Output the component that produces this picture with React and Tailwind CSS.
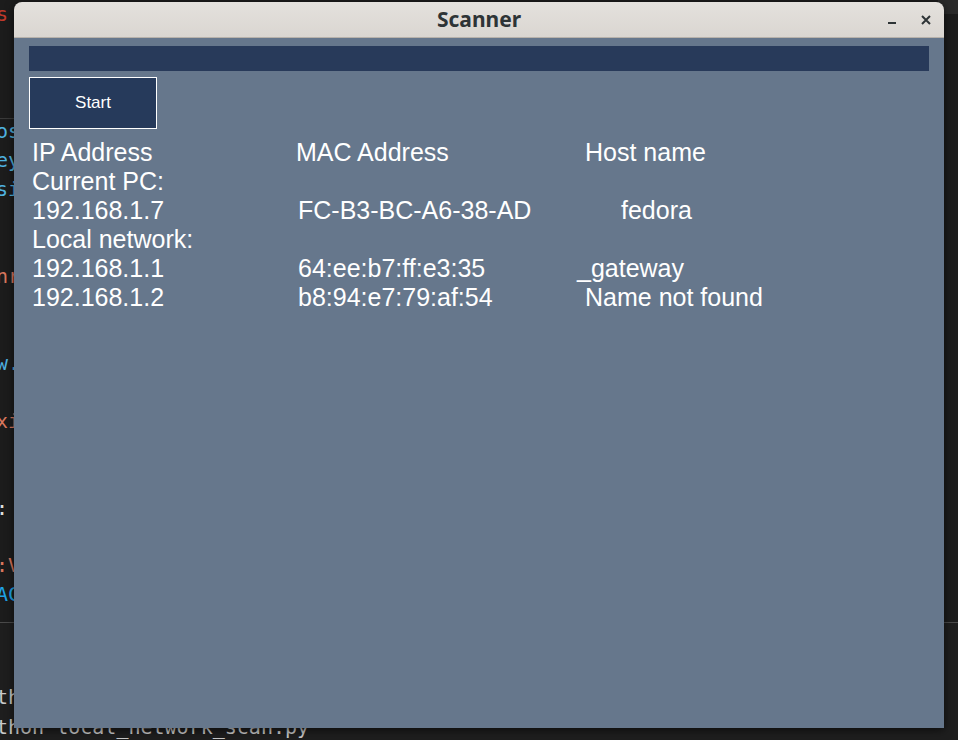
import React from "react";

const codeLines = [
  { top: 118, text: "os", color: "text-[#4fb3e0]" },
  { top: 147, text: "ey", color: "text-[#4fb3e0]" },
  { top: 176, text: "si", color: "text-[#4fb3e0]" },
  { top: 263, text: "nr", color: "text-[#d9775e]" },
  { top: 350, text: "w.", color: "text-[#4fb3e0]" },
  { top: 408, text: "xi", color: "text-[#d9775e]" },
  { top: 495, text: ":", color: "text-[#e0e0e0]" },
  { top: 552, text: ":V", color: "text-[#d9775e]" },
  { top: 581, text: "AC", color: "text-[#1fa3e6]" },
  { top: 684, text: "th", color: "text-[#c8c8c8]" },
  { top: 714, text: "thon local_network_scan.py", color: "text-[#c8c8c8]" },
];

const rows = [
  { ip: "IP Address", mac: "MAC Address", host: "Host name", macPad: "", hostPad: "" },
  { ip: "Current PC:" },
  { ip: "192.168.1.7", mac: "FC-B3-BC-A6-38-AD", host: "fedora", macPad: "pl-[2px]", hostPad: "pl-[36px]" },
  { ip: "Local network:" },
  { ip: "192.168.1.1", mac: "64:ee:b7:ff:e3:35", host: "_gateway", macPad: "pl-[2px]", hostPad: "-ml-[8px]" },
  { ip: "192.168.1.2", mac: "b8:94:e7:79:af:54", host: "Name not found", macPad: "pl-[2px]", hostPad: "" },
];

function Row({ ip, mac, host, macPad, hostPad }) {
  return (
    <div className="flex h-[29px] items-center whitespace-nowrap">
      <span className={mac ? "w-[264px] shrink-0" : ""}>{ip}</span>
      {mac && <span className={`w-[289px] shrink-0 ${macPad}`}>{mac}</span>}
      {host && <span className={hostPad}>{host}</span>}
    </div>
  );
}

export default function App() {
  return (
    <div className="relative h-[740px] w-[958px] overflow-hidden bg-[#1c1c1c]">
      {/* editor behind the window */}
      <div className="absolute left-0 top-[118px] h-px w-[20px] bg-[#3a3a3a]" />
      <div className="absolute left-0 top-[622px] h-px w-[958px] bg-[#4a4a4a]" />
      <div className="absolute left-0 top-[623px] h-[117px] w-[958px] bg-[#1e1e1e]" />
      <div className="absolute right-0 top-0 h-[14px] w-[20px] bg-[#2a2a2a]" />
      <span className="absolute left-[-4px] top-[2px] font-['DejaVu_Sans_Mono',monospace] text-[20px] leading-[24px] text-[#c0392b]">
        s
      </span>
      {codeLines.map((l) => (
        <div
          key={l.top}
          className={`absolute left-[-4px] whitespace-pre font-['DejaVu_Sans_Mono',monospace] text-[20px] leading-[26px] ${l.color}`}
          style={{ top: l.top }}
        >
          {l.text}
        </div>
      ))}

      {/* Scanner window */}
      <div className="absolute left-[14px] top-[2px] flex h-[726px] w-[930px] flex-col overflow-hidden rounded-t-[8px] shadow-[0_2px_10px_rgba(0,0,0,0.6)]">
        <div className="relative flex h-[36px] shrink-0 items-center justify-center border-b border-[#b8b2ab] bg-gradient-to-b from-[#e4e1dd] to-[#dad6d1]">
          <span className="font-['Noto_Sans',sans-serif] text-[21px] font-bold text-[#2e3436]">Scanner</span>
          <div className="absolute right-[12px] top-0 flex h-[36px] items-center gap-[22px]">
            <svg width="12" height="12" viewBox="0 0 12 12">
              <rect x="2" y="8" width="8" height="2" fill="#2e3436" />
            </svg>
            <svg width="12" height="12" viewBox="0 0 12 12">
              <path d="M2 2 L10 10 M10 2 L2 10" stroke="#2e3436" strokeWidth="2" />
            </svg>
          </div>
        </div>

        <div className="flex-1 bg-[#66778c] px-[15px] pt-[8px] font-['Liberation_Sans',Arial,sans-serif] text-white">
          <div className="h-[25px] bg-[#283a5a]" />
          <button className="mt-[6px] flex h-[52px] w-[128px] items-center justify-center border border-white bg-[#263a5b] text-[17px] text-white">
            Start
          </button>
          <div className="mt-[9px] pl-[3px] text-[25px] leading-[29px]">
            {rows.map((r, i) => (
              <Row key={i} {...r} />
            ))}
          </div>
        </div>
      </div>
    </div>
  );
}
